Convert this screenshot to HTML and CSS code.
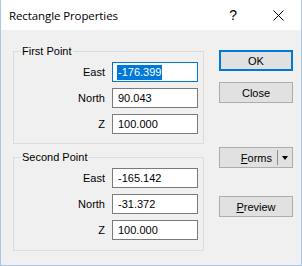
FILE: index.html
```html
<!DOCTYPE html>
<html>
<head>
<meta charset="utf-8">
<link rel="stylesheet" href="styles.css">
</head>
<body>
<div class="window">
  <div class="titlebar">
    <span class="title">Rectangle Properties</span>
    <span class="help">?</span>
    <span class="close-x"><svg width="11" height="11" viewBox="0 0 11 11"><path d="M0.5 0.5 L10.5 10.5 M10.5 0.5 L0.5 10.5" stroke="#000" stroke-width="1" fill="none"/></svg></span>
  </div>
  <div class="client">
    <div class="groups">
      <div class="group g1">
        <span class="legend">First Point</span>
        <div class="rows">
          <label>East</label><div class="field"><span class="sel">-176.399</span></div>
          <label>North</label><div class="field">90.043</div>
          <label>Z</label><div class="field">100.000</div>
        </div>
      </div>
      <div class="group g2">
        <span class="legend">Second Point</span>
        <div class="rows">
          <label>East</label><div class="field">-165.142</div>
          <label>North</label><div class="field">-31.372</div>
          <label>Z</label><div class="field">100.000</div>
        </div>
      </div>
    </div>
    <div class="buttons">
      <div class="btn default">OK</div>
      <div class="btn b-close">Close</div>
      <div class="btn split"><span class="split-label"><u>F</u>orms</span><span class="sep"></span><span class="arrow"></span></div>
      <div class="btn b-preview"><u>P</u>review</div>
    </div>
  </div>
</div>
</body>
</html>
```

FILE: styles.css
```css
html, body { margin: 0; padding: 0; }
body {
  width: 302px; height: 266px; overflow: hidden;
  font-family: "Liberation Sans", Arial, sans-serif;
  font-size: 11px; color: #000;
}
.window {
  width: 302px; height: 266px; box-sizing: border-box;
  border: 1px solid #a9c7e5; border-top: none;
  display: flex; flex-direction: column;
  background: #f0f0f0;
}
.titlebar {
  height: 30px; background: #fff; flex: none;
  display: flex; align-items: center; position: relative;
}
.title {
  font-family: "Open Sans", sans-serif; font-size: 11.5px;
  margin-left: 8px; margin-top: 1px; letter-spacing: -0.1px;
}
.help {
  font-family: "Liberation Sans", sans-serif; font-size: 14px;
  margin-left: auto; margin-right: 36px; margin-top: 0px;
}
.close-x { width: 11px; height: 11px; margin-right: 17px; display: flex; }
.client { flex: 1; display: flex; }
.groups { width: 205px; padding-left: 12px; padding-top: 21px; box-sizing: border-box; }
.group {
  position: relative; width: 191px; box-sizing: border-box;
  border: 1px solid #dcdcdc;
}
.g1 { height: 93px; }
.g2 { height: 94px; margin-top: 13px; }
.legend {
  position: absolute; left: 7px; top: -8px; padding: 0 1px;
  background: #f0f0f0; line-height: 14px;
}
.rows {
  display: grid; grid-template-columns: 1fr 86px;
  column-gap: 7px; row-gap: 6px;
  padding: 10px 5px 0 0; align-items: center;
}
.rows label { text-align: right; }
.field {
  height: 20px; box-sizing: border-box; border: 1px solid #7a7a7a;
  background: #fff; padding-left: 5px; line-height: 18px;
}
.g1 .field:first-of-type { border-color: #0078d7; }
.sel { background: #0078d7; color: #fff; display: inline-block; line-height: 15px; padding: 0 1px; margin-left: -1px; }
.buttons { padding-left: 13px; padding-top: 20px; }
.btn {
  width: 74px; height: 21px; box-sizing: border-box;
  background: #e1e1e1; border: 1px solid #adadad;
  display: flex; align-items: center; justify-content: center;
}
.btn.default { border: 2px solid #0078d7; }
.b-close { margin-top: 11px; }
.split { margin-top: 44px; justify-content: flex-end; padding-right: 4px; }
.split-label { margin-right: 5px; }
.sep { width: 1px; height: 15px; background: #8c8c8c; margin-right: 4px; }
.arrow { width: 0; height: 0; border-left: 3.5px solid transparent; border-right: 3.5px solid transparent; border-top: 4px solid #000; }
.b-preview { margin-top: 28px; }
u { text-decoration: underline; text-underline-offset: 1px; }
```
